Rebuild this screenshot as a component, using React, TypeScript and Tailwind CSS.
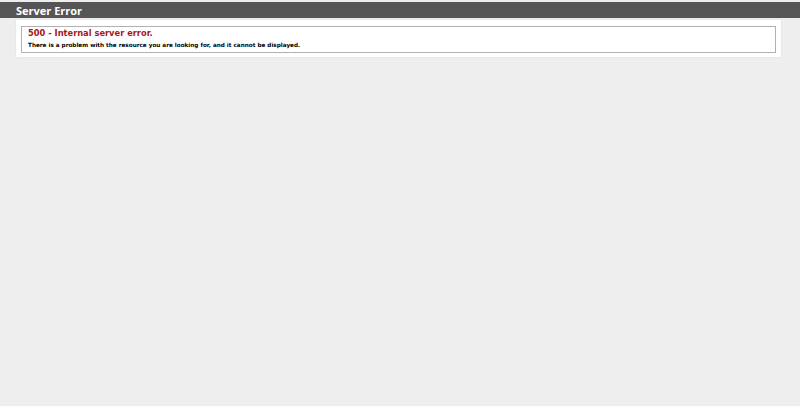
export default function App() {
  return (
    <div className="min-h-[406px] bg-[#eeeeee] pt-[2px] font-['DejaVu_Sans',Verdana,sans-serif]">
      <div className="flex h-[16px] items-center bg-[#555555] px-[16px]">
        <h1 className="font-['Open_Sans',sans-serif] text-[11px] font-bold leading-none text-white">
          Server Error
        </h1>
      </div>
      <div className="ml-[16px] mt-[2px] w-[765px] bg-white px-[5px] pb-[4px] pt-[6px] shadow-[0_0_2px_rgba(0,0,0,0.08)]">
        <fieldset className="h-[27px] border border-[#b0b0b0] px-[6px]">
          <h2 className="text-[8.3px] font-bold leading-[12px] text-[#a8161b]">
            500 - Internal server error.
          </h2>
          <h3 className="mt-[3px] text-[5.7px] font-bold leading-[7px] text-black">
            There is a problem with the resource you are looking for, and it cannot be displayed.
          </h3>
        </fieldset>
      </div>
    </div>
  );
}
